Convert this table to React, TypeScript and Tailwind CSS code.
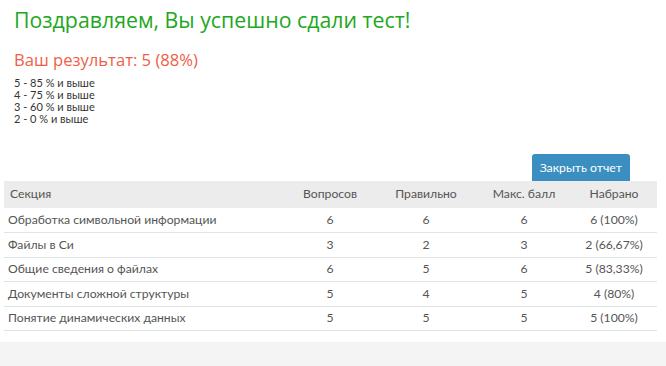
import React from "react";

const grades = ["5 - 85 % и выше", "4 - 75 % и выше", "3 - 60 % и выше", "2 - 0 % и выше"];

const rows = [
  { name: "Обработка символьной информации", q: 6, ok: 6, max: 6, got: "6 (100%)" },
  { name: "Файлы в Си", q: 3, ok: 2, max: 3, got: "2 (66,67%)" },
  { name: "Общие сведения о файлах", q: 6, ok: 5, max: 6, got: "5 (83,33%)" },
  { name: "Документы сложной структуры", q: 5, ok: 4, max: 5, got: "4 (80%)" },
  { name: "Понятие динамических данных", q: 5, ok: 5, max: 5, got: "5 (100%)" },
];

export default function App() {
  return (
    <div className="w-[666px] h-[366px] bg-white flex flex-col overflow-hidden font-['Lato','Open_Sans',sans-serif]">
      <div className="h-[342px] shrink-0 pr-[9px]">
        <div className="pl-[14px] pt-[4px]">
          <h1 className="font-['Open_Sans',sans-serif] text-[21.3px] leading-[32px] text-[#22a722]">
            Поздравляем, Вы успешно сдали тест!
          </h1>
          <h2 className="mt-[12px] font-['Open_Sans',sans-serif] text-[16.6px] leading-[24px] text-[#ef5e46]">
            Ваш результат: 5 (88%)
          </h2>
          <div className="mt-[5px] text-[11px] leading-[12px] text-[#333]">
            {grades.map((g) => (
              <div key={g}>{g}</div>
            ))}
          </div>
        </div>

        <div className="mt-[29px] flex justify-end pr-[27px]">
          <button className="h-[27px] px-[8px] rounded-t-[3px] bg-[#3a8fc0] text-white text-[12.3px] leading-[27px]">
            Закрыть отчет
          </button>
        </div>

        <table className="ml-[4px] w-[653px] border-collapse text-[12.2px] text-[#555]">
          <thead>
            <tr className="bg-[#ececec] h-[27px]">
              <th className="text-left font-normal pl-[6px] w-[281px]">Секция</th>
              <th className="font-normal w-[90px]">Вопросов</th>
              <th className="font-normal w-[102px]">Правильно</th>
              <th className="font-normal w-[94px]">Макс. балл</th>
              <th className="font-normal">Набрано</th>
            </tr>
          </thead>
          <tbody>
            {rows.map((r) => (
              <tr key={r.name} className="h-[24.5px] border-b border-[#dde6e6]">
                <td className="text-left pl-[4px]">{r.name}</td>
                <td className="text-center">{r.q}</td>
                <td className="text-center">{r.ok}</td>
                <td className="text-center">{r.max}</td>
                <td className="text-center">{r.got}</td>
              </tr>
            ))}
          </tbody>
        </table>
      </div>
      <div className="flex-1 bg-[#f4f4f4]" />
    </div>
  );
}
